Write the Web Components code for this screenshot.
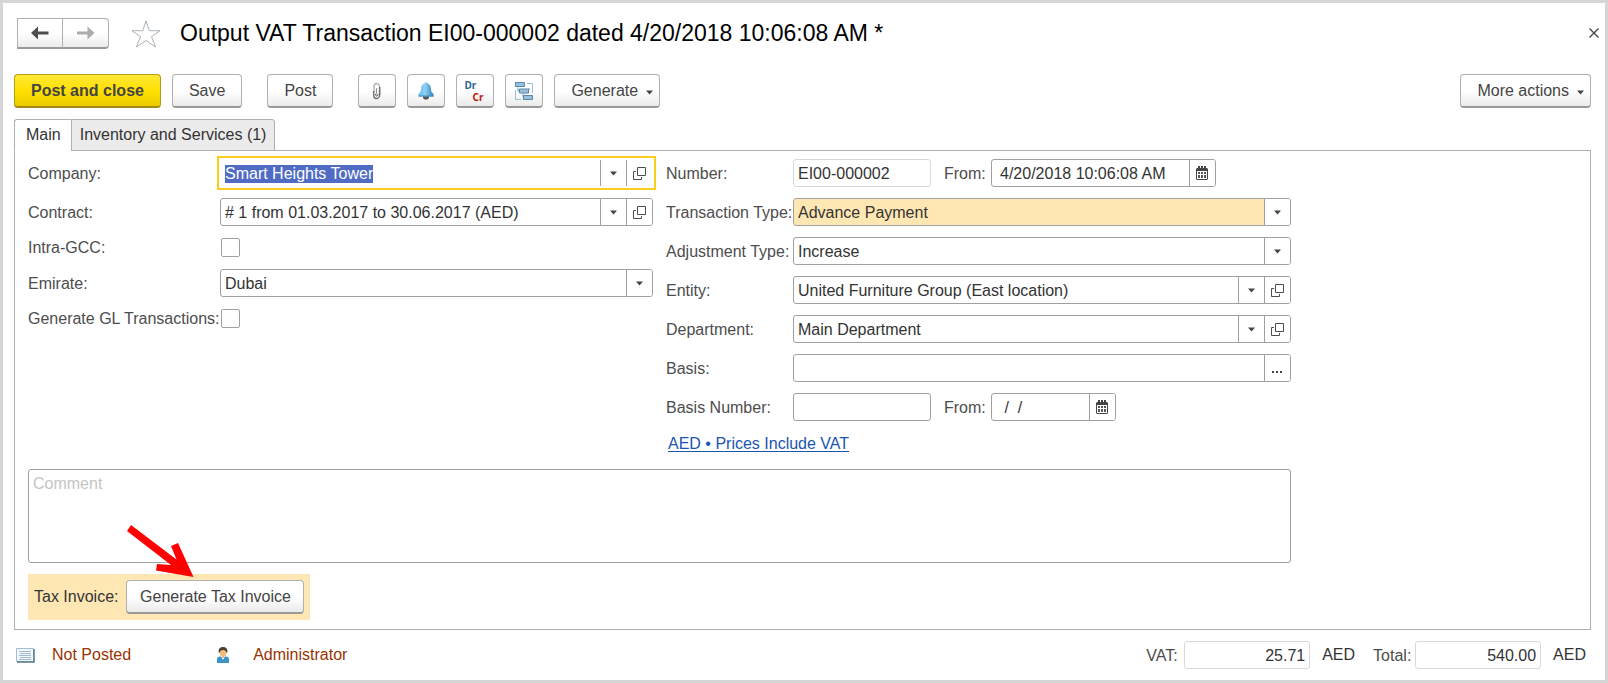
<!DOCTYPE html>
<html lang="en">
<head>
<meta charset="utf-8">
<title>Output VAT Transaction</title>
<style>
html, body { margin: 0; }
body { font: 16px/20px "Liberation Sans", Arial, sans-serif; color: #333; background: #fff; }
</style>
</head>
<body>
<vat-window></vat-window>
<script>
const ICONS = {
  back: '<svg width="18" height="14" viewBox="0 0 18 14"><path d="M0 7 7 0.5V5.500H17.500V8.500H7V13.500Z" fill="#4d4d4d"/></svg>',
  forward: '<svg width="18" height="14" viewBox="0 0 18 14"><path d="M17.500 7 10.500 0.500V5.500H0V8.500H10.500V13.500Z" fill="#acacac"/></svg>',
  star: '<svg width="30" height="30" viewBox="0 0 30 30"><path d="M15 2 18.300 11.700H29L20.500 17.700 24.500 28 15 21.500 5.500 28 9.500 17.700 1 11.700H11.700Z" fill="#fff" stroke="#aab2b8"/></svg>',
  close: '<svg width="10" height="10" viewBox="0 0 10 10"><path d="M0.500 0.500 9.500 9.500M9.500 0.500 0.500 9.500" stroke="#444" stroke-width="1.300"/></svg>',
  down: '<svg width="7" height="5" viewBox="0 0 7 5"><path d="M0 0.500H7L3.500 4.500Z" fill="#444"/></svg>',
  open: '<svg width="13" height="13" viewBox="0 0 13 13" fill="none" stroke="#4d4d4d"><path d="M4.500 0.500H12.500V8.500H4.500Z"/><path d="M3 4.500H0.500V12.500H8.500V10"/></svg>',
  calendar: '<svg width="12" height="14" viewBox="0 0 12 14"><path d="M1 2H2V0H4V2H5V0H7V2H8V0H10V2H11L12 3V13L11 14H1L0 13V3Z" fill="#444"/><path d="M1 5H11V13H1Z" fill="#fff"/><path d="M2 6h2v2H2zM5 6h2v2H5zM8 6h2v2H8zM2 9h2v3H2zM5 9h2v3H5zM8 9h2v3H8z" fill="#555"/></svg>',
  dots: '<svg width="11" height="10" viewBox="0 0 11 10"><path d="M0 8h2v2H0zM4 8h2v2H4zM8 8h2v2H8z" fill="#444"/></svg>',
  clip: '<svg width="10" height="18" viewBox="0 0 10 18" fill="none"><path d="M2 10V5Q2 1.500 4.500 1.500T7.500 4.500V13" stroke="#b4b4b4" stroke-width="1.400"/><path d="M4.500 6V12" stroke="#999" stroke-width="1.200"/><path d="M1.700 9V13Q1.700 16.500 4.500 16.500T7.700 13V5" stroke="#707070" stroke-width="1.400"/><path d="M3.500 12Q3.500 14 4.700 14T6 12" stroke="#555"/></svg>',
  bell: '<svg width="16" height="18" viewBox="0 0 16 18"><defs><linearGradient id="b"><stop stop-color="#6fb9e8"/><stop offset=".45" stop-color="#8fd0f5"/><stop offset="1" stop-color="#2c7fb8"/></linearGradient></defs><path d="M5 14H11V16L9.500 17.500H6.500L5 16Z" fill="#555"/><path d="M6.500 1.500V0.500H9.500V1.500Q13 2.500 13 7.500 13 10.500 15.500 12V14.500H0.500V12Q3 10.500 3 7.500 3 2.500 6.500 1.500Z" fill="url(#b)"/><path d="M0.500 14H15.500" stroke="#3f89bb"/></svg>',
  structure: '<svg width="18" height="18" viewBox="0 0 18 18"><path d="M12 1.500H17.500V11M0.500 8V17.500H6" fill="none" stroke="#9dbdd4"/><path d="M3 5.500V9H5M14 6V8M8 12V15H9" fill="none" stroke="#6f9cbc"/><path d="M0.500 0.500H9.500V4.500H0.500ZM4.500 7H13.500V11H4.500ZM8.500 13.500H17.500V17.500H8.500Z" fill="#9dc0da" stroke="#5588ab"/></svg>',
  journal: '<svg width="19" height="15" viewBox="0 0 19 15"><path d="M0.500 0.500H17.500V13.500H0.500Z" fill="#f2f8fc" stroke="#9fc0d4"/><path d="M18 1V14H1" fill="none" stroke="#56788c" stroke-width="1.500"/><path d="M3 3.500h12M4 5.500h11M3 7.500h12M4 9.500h11M3 11.500h12" stroke="#9fb9cb"/></svg>',
  user: '<svg width="12" height="16" viewBox="0 0 12 16"><path d="M0 16V12Q0 10 3 9.500H9Q12 10 12 12V16Z" fill="#3d93c5"/><path d="M4 9H8L6 13Z" fill="#fff"/><path d="M5 8H7V10.500H5Z" fill="#e0a860"/><ellipse cx="6" cy="5" rx="3.500" ry="4.500" fill="#f0bd78"/><path d="M1.500 5Q1.500 0 6 0T10.500 5L9.500 6Q9 3 6 3T2.500 6Z" fill="#4a3c30"/></svg>'
};

function define(name, render) {
  customElements.define(name, class extends HTMLElement {
    connectedCallback() {
      if (this.shadowRoot) return;
      this.attachShadow({ mode: 'open' }).innerHTML = render(this);
      if (this.hasAttribute('selected')) {
        const input = this.shadowRoot.querySelector('input');
        input.focus({ preventScroll: true });
        input.select();
      }
    }
  });
}

/* <tool-button icon menu primary>: raised toolbar button */
define('tool-button', el => `
<style>
:host { display: block; flex: none; }
button { box-sizing: border-box; display: flex; align-items: center; justify-content: center; gap: 8px; width: 100%; height: 34px;
  margin: 0; padding: 0 16px; font: inherit; color: #444; white-space: nowrap;
  border: 1px solid #b0b0b0; border-bottom: 2px solid #999; border-radius: 4px;
  background: linear-gradient(#fff 50%, #ebebeb); }
:host([icon]) button { width: 38px; padding: 0; }
:host([menu]) button { padding-right: 6px; }
:host([menu]) svg { margin-top: 3px; }
:host([primary]) button { font-weight: bold; border-color: #b89f12; border-bottom-color: #a08a10; background: linear-gradient(#ffe838, #ffe000 50%, #edcb00); }
svg { display: block; }
</style>
<button type="button" aria-label="${el.getAttribute('tip') || el.textContent.trim()}">${ICONS[el.getAttribute('icon')] || ''}<slot></slot>${el.hasAttribute('menu') ? ICONS.down : ''}</button>`);

/* <form-field label value kind buttons>: label and its control */
define('form-field', el => {
  const kind = el.getAttribute('kind') || 'text';
  const value = el.getAttribute('value') || '';
  const buttons = (el.getAttribute('buttons') || '').split(' ').filter(Boolean);
  const tips = { down: 'Choose', open: 'Open', calendar: 'Calendar', dots: 'Select' };
  let control;
  if (kind === 'check') control = '<input id="c" type="checkbox">';
  else if (kind === 'select') control = `<div class="box pick"><select id="c"><option>${value}</option></select><span class="cell">${ICONS.down}</span></div>`;
  else control = `<div class="box"><input id="c" type="text" autocomplete="off" value="${value}"${el.hasAttribute('readonly') ? ' readonly' : ''}>${buttons.map(b => `<button class="cell" type="button" aria-label="${tips[b]}">${ICONS[b]}</button>`).join('')}</div>`;
  return `
<style>
:host { display: grid; grid-template-columns: var(--label, auto) minmax(0, 1fr); align-items: center; min-width: 0; }
label { padding-top: 1px; line-height: 20px; color: #4d4d4d; white-space: nowrap; }
.box { box-sizing: border-box; display: flex; height: 28px; border: 1px solid #a0a0a0; border-radius: 3px; background: #fff; overflow: hidden; }
.pick { display: grid; grid-template-columns: minmax(0, 1fr) 26px; }
input[type=text], select { box-sizing: border-box; flex: 1; width: 100%; min-width: 0; height: 26px; margin: 0; padding: 2px 4px 0 var(--inset, 4px);
  font: inherit; color: #333; border: 0; outline: 0; background: transparent; appearance: none; text-align: var(--align, left); }
select { grid-area: 1 / 1 / 2 / 3; }
.pick .cell { grid-area: 1 / 2 / 2 / 3; pointer-events: none; }
.cell { box-sizing: border-box; flex: none; display: flex; align-items: center; justify-content: center; width: 26px; height: 26px; margin: 0; padding: 0 1px 0 0;
  border: 0; border-left: 1px solid #a0a0a0; background: #fff; }
svg { display: block; }
input[type=checkbox] { box-sizing: border-box; width: 19px; height: 19px; margin: 0 0 0 1px; appearance: none; border: 1px solid #a0a0a0; border-radius: 2px; background: #fff; }
:host([readonly]) .box { border-color: #d8d8d8; }
:host([required]) .box { background: #ffe7b3; }
:host([selected]) .box { border-color: #fff; outline: 2px solid #fbcd1f; outline-offset: 1px; border-radius: 0; }
::selection { color: #fff; background: #4f6bc4; }
</style>
<label for="c">${el.getAttribute('label')}</label>${control}`;
});

define('nav-history', () => `
<style>
:host { display: flex; flex: none; }
button { box-sizing: border-box; display: flex; align-items: center; justify-content: center; width: 46px; height: 31px; margin: 0; padding: 0;
  border: 1px solid #b0b0b0; border-bottom: 2px solid #999; background: linear-gradient(#fff 50%, #ebebeb); }
button:first-child { border-radius: 4px 0 0 4px; border-right-color: #d0d0d0; }
button:last-child { border-left: 0; border-radius: 0 4px 4px 0; }
</style>
<button type="button" aria-label="Back">${ICONS.back}</button><button type="button" aria-label="Forward">${ICONS.forward}</button>`);

define('tab-strip', () => `
<style>
:host { display: flex; position: relative; z-index: 1; margin-bottom: -1px; }
button { box-sizing: border-box; height: 32px; margin: 0; padding: 0 8px; font: inherit; color: #333; white-space: nowrap;
  border: 1px solid #b0b0b0; background: #ebebeb; border-radius: 0 3px 0 0; }
button[aria-selected=true] { padding: 0 10px 0 11px; background: #fff; border-bottom-color: #fff; border-right: 0; border-radius: 3px 0 0 0; }
</style>
<button type="button" role="tab" aria-selected="true">Main</button><button type="button" role="tab" aria-selected="false">Inventory and Services (1)</button>`);

define('comment-box', () => `
<style>
:host { display: block; }
textarea { box-sizing: border-box; display: block; width: 100%; height: 94px; margin: 0; padding: 4px; font: inherit; color: #333;
  border: 1px solid #a0a0a0; border-radius: 3px; resize: none; outline: 0; background: #fff; }
::placeholder { color: #c4c4c4; opacity: 1; }
</style>
<textarea aria-label="Comment" placeholder="Comment"></textarea>`);

define('tax-invoice', () => `
<style>
:host { position: relative; display: flex; align-items: center; gap: 8px; width: max-content; height: 46px; box-sizing: border-box; padding: 0 6px; background: #ffe7b3; }
tool-button { width: 178px; }
svg { position: absolute; left: 96px; bottom: 40px; pointer-events: none; }
</style>
<span>Tax Invoice:</span><tool-button>Generate Tax Invoice</tool-button>
<svg width="72" height="58" viewBox="0 0 72 58" aria-hidden="true"><path d="M69.500 55 54 21 47 24 52.500 37.500 7 3 3 9 47 43 33 42 32 48.500Z" fill="#f00"/></svg>`);

define('status-item', el => `
<style>
:host { display: flex; align-items: center; gap: var(--gap, 17px); color: #993300; white-space: nowrap; }
</style>
${ICONS[el.getAttribute('icon')]}<slot></slot>`);

define('vat-window', () => `
<style>
:host { box-sizing: border-box; display: flex; flex-direction: column; min-height: 100vh; border: 3px solid #d6d6d6; padding: 15px 14px 11px 11px; background: #fff; }
header { display: flex; align-items: center; height: 31px; padding-left: 3px; }
h1 { flex: 1; margin: 0 0 2px 19px; font-size: 23px; line-height: 28px; font-weight: normal; color: #000; white-space: nowrap; }
.plain { margin: 0; padding: 0; border: 0; background: none; display: block; }
.star { margin-left: 22px; }
.plain svg { display: block; }
.close { margin: 0 -8px 2px 0; }
nav { display: flex; gap: 11px; margin: 25px 0 11px; }
.post, .clip { margin-left: 14px; }
.more { margin-left: auto; }
.drcr { position: relative; display: block; width: 22px; height: 24px; font: bold 10px/12px "Noto Sans", sans-serif; }
.dr { position: absolute; left: 0; top: 0; color: #2f6690; }
.cr { position: absolute; right: 3px; bottom: 0; color: #c01808; }
main { flex: 1; border: 1px solid #b0b0b0; padding: 8px 13px; }
.form { max-width: 1263px; }
.columns { display: grid; grid-template-columns: minmax(0, 1fr) minmax(0, 1fr); gap: 13px; }
.left { --label: 192px; display: grid; align-content: start; gap: 11px; }
.right { --label: 127px; display: grid; align-content: start; gap: 11px; }
.pair { display: flex; gap: 13px; }
.pair form-field:first-child { width: 265px; }
.pair form-field:last-child { --label: 47px; --inset: 8px; width: 272px; }
.pair form-field.short { width: 172px; }
a { justify-self: start; margin: 3px 0 0 2px; line-height: 18px; color: #1a55b0; text-decoration: underline; text-underline-offset: 2px; }
comment-box { margin: 16px 0 11px; }
footer { display: flex; align-items: center; gap: 12px; height: 28px; margin-top: 11px; padding: 0 5px 0 2px; }
.who { --gap: 24px; margin-left: 74px; }
footer form-field { --align: right; --label: 38px; width: 164px; }
.vat { margin-left: auto; }
.total { --label: 42px; width: 168px; margin-left: 6px; }
</style>
<header>
  <nav-history></nav-history>
  <button class="plain star" type="button" aria-label="Add to favorites">${ICONS.star}</button>
  <h1>Output VAT Transaction EI00-000002 dated 4/20/2018 10:06:08 AM *</h1>
  <button class="plain close" type="button" aria-label="Close">${ICONS.close}</button>
</header>
<nav>
  <tool-button primary>Post and close</tool-button>
  <tool-button>Save</tool-button>
  <tool-button class="post">Post</tool-button>
  <tool-button class="clip" icon="clip" tip="Attachments"></tool-button>
  <tool-button icon="bell" tip="Reminder"></tool-button>
  <tool-button icon="none" tip="Dr Cr"><span class="drcr"><span class="dr">Dr</span><span class="cr">Cr</span></span></tool-button>
  <tool-button icon="structure" tip="Related documents"></tool-button>
  <tool-button menu>Generate</tool-button>
  <tool-button class="more" menu>More actions</tool-button>
</nav>
<tab-strip role="tablist"></tab-strip>
<main><div class="form">
  <div class="columns">
    <div class="left">
      <form-field selected label="Company:" value="Smart Heights Tower" buttons="down open"></form-field>
      <form-field label="Contract:" value="# 1 from 01.03.2017 to 30.06.2017 (AED)" buttons="down open"></form-field>
      <form-field kind="check" label="Intra-GCC:"></form-field>
      <form-field kind="select" label="Emirate:" value="Dubai"></form-field>
      <form-field kind="check" label="Generate GL Transactions:"></form-field>
    </div>
    <div class="right">
      <div class="pair">
        <form-field readonly label="Number:" value="EI00-000002"></form-field>
        <form-field label="From:" value="4/20/2018 10:06:08 AM" buttons="calendar"></form-field>
      </div>
      <form-field required kind="select" label="Transaction Type:" value="Advance Payment"></form-field>
      <form-field kind="select" label="Adjustment Type:" value="Increase"></form-field>
      <form-field label="Entity:" value="United Furniture Group (East location)" buttons="down open"></form-field>
      <form-field label="Department:" value="Main Department" buttons="down open"></form-field>
      <form-field label="Basis:" buttons="dots"></form-field>
      <div class="pair">
        <form-field label="Basis Number:"></form-field>
        <form-field class="short" label="From:" value=" /  /" buttons="calendar"></form-field>
      </div>
      <a href="#prices">AED • Prices Include VAT</a>
    </div>
  </div>
  <comment-box></comment-box>
  <tax-invoice></tax-invoice>
</div></main>
<footer>
  <status-item icon="journal">Not Posted</status-item>
  <status-item class="who" icon="user">Administrator</status-item>
  <form-field class="vat" readonly label="VAT:" value="25.71"></form-field><span>AED</span>
  <form-field class="total" readonly label="Total:" value="540.00"></form-field><span>AED</span>
</footer>`);
</script>
</body>
</html>
